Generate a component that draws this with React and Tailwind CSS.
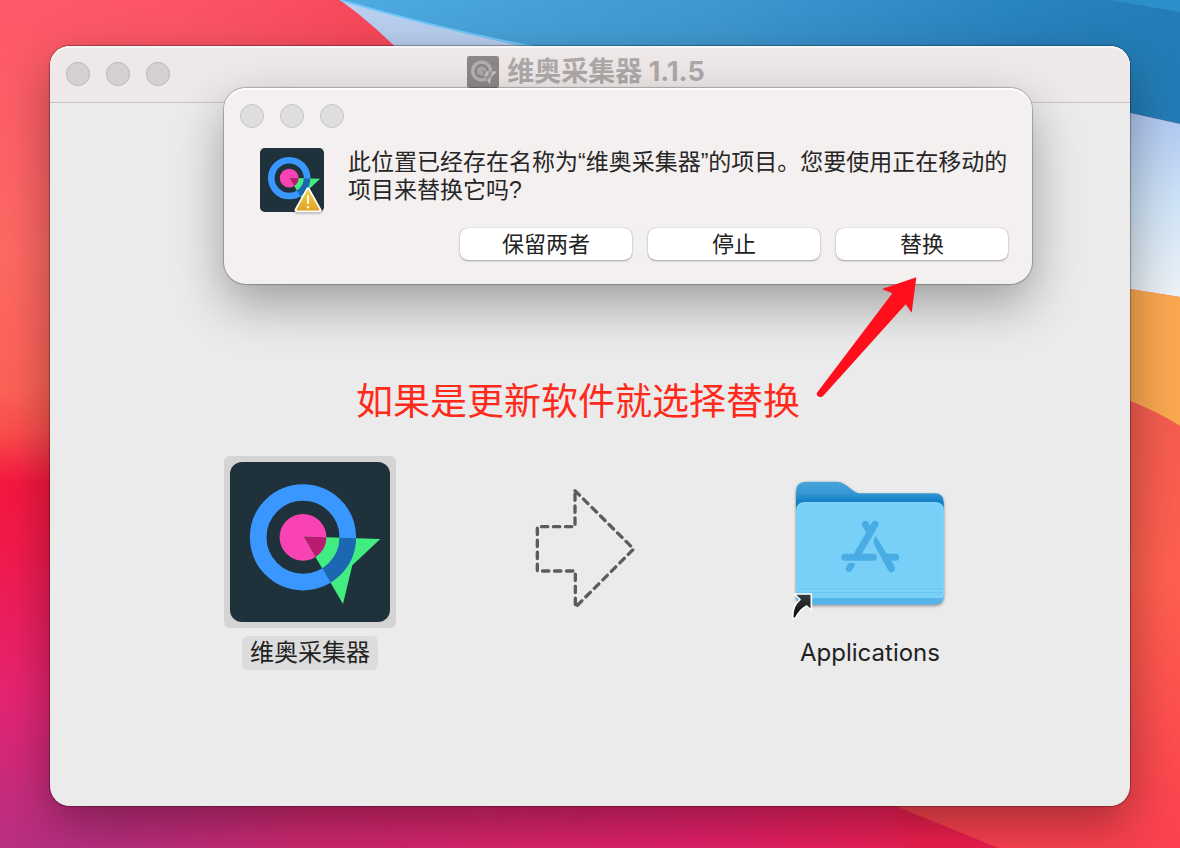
import { useId } from "react";
import clsx from "clsx";

const COLOR_LOGO = {
  tile: "#1f323b",
  ring: "#3a97ff",
  dot: "#f943b5",
  arrow: "#41ec81",
  arrowOnRing: "#1c67b2",
  arrowOnDot: "#bb1a72",
};

const GRAY_LOGO = {
  tile: "#8c8887",
  ring: "#b5b0b0",
  dot: "#aba7a6",
  arrow: "#c6c2c1",
  arrowOnRing: "#9a9695",
  arrowOnDot: "#918d8c",
};

const DIALOG_BUTTONS = ["保留两者", "停止", "替换"];

function Logo({ colors = COLOR_LOGO, className }) {
  const clipId = useId();

  return (
    <svg viewBox="0 0 160 160" className={className} aria-hidden="true">
      <defs>
        <clipPath id={clipId}>
          <path d="M73.5 74.5 150.3 77 122.3 103.3 113 142Z" />
        </clipPath>
      </defs>
      <rect width="160" height="160" rx="12" fill={colors.tile} />
      <circle cx="73" cy="75.3" r="44.8" fill="none" stroke={colors.ring} strokeWidth="16.6" />
      <circle cx="73" cy="75.3" r="23.4" fill={colors.dot} />
      <g clipPath={`url(#${clipId})`}>
        <rect width="160" height="160" fill={colors.arrow} />
        <circle cx="73" cy="75.3" r="44.8" fill="none" stroke={colors.arrowOnRing} strokeWidth="16.6" />
        <circle cx="73" cy="75.3" r="23.4" fill={colors.arrowOnDot} />
      </g>
    </svg>
  );
}

function WarningBadge({ className }) {
  return (
    <svg viewBox="0 0 90 84" className={className} aria-hidden="true">
      <defs>
        <linearGradient id="warning-fill" x1="0" y1="0" x2="0" y2="1">
          <stop offset="0" stopColor="#f8d24a" />
          <stop offset="1" stopColor="#dfa322" />
        </linearGradient>
      </defs>
      <path d="M45 8 82 75H8Z" fill="#fff" stroke="#fff" strokeWidth="13" strokeLinejoin="round" />
      <path d="M45 11 79 73H11Z" fill="url(#warning-fill)" stroke="url(#warning-fill)" strokeWidth="5" strokeLinejoin="round" />
      <path d="M45 29V52" stroke="#fff" strokeWidth="6" strokeLinecap="round" />
      <circle cx="45" cy="65" r="4" fill="#fff" />
    </svg>
  );
}

function DashedArrow() {
  return (
    <svg viewBox="-48 -42 516 516" className="size-[172px]" aria-hidden="true">
      <path
        d="M165 62 341 237 166 412V303H52V170H165Z"
        fill="none"
        stroke="#5c5c5c"
        strokeWidth="10"
        strokeLinecap="round"
        strokeLinejoin="round"
        strokeDasharray="19 17"
      />
    </svg>
  );
}

function ApplicationsFolder() {
  return (
    <svg viewBox="12 -42 516 516" className="size-[172px]" aria-hidden="true">
      <defs>
        <linearGradient id="folder-back" x1="0" y1="35" x2="0" y2="110" gradientUnits="userSpaceOnUse">
          <stop offset="0" stopColor="#48a5d9" />
          <stop offset="0.45" stopColor="#3698d3" />
          <stop offset="0.85" stopColor="#0f7cc6" />
        </linearGradient>
        <linearGradient id="alias-fill" x1="0" y1="0" x2="0" y2="1">
          <stop offset="0" stopColor="#3a3d42" />
          <stop offset="1" stopColor="#0a0a0a" />
        </linearGradient>
        <filter id="folder-shadow" x="-10%" y="-10%" width="120%" height="125%">
          <feDropShadow dx="0" dy="4" stdDeviation="4" floodOpacity="0.45" />
        </filter>
      </defs>
      <g filter="url(#folder-shadow)">
        <path
          d="M48 65Q48 35 78 35H165C182 35 190 39 202 48L217 60C226 67 232 70 246 70H464Q491 70 491 97V376Q491 403 464 403H76Q48 403 48 376Z"
          fill="url(#folder-back)"
        />
        <path d="M49 122Q49 97 74 97H466Q491 97 491 122V376Q491 403 464 403H76Q49 403 49 376Z" fill="#78d0f9" />
      </g>
      <path d="M49 383H490Q487 403 464 403H76Q52 403 49 383Z" fill="#54b6e8" />
      <path d="M49 357H491M49 368H491" stroke="#6bc5f1" strokeWidth="3" />
      <path d="M49 362H491M49 382H491" stroke="#8ad9fc" strokeWidth="2" />
      <path d="M50 378V122Q50 98 74 98H466Q490 98 490 122V378" fill="none" stroke="#98dffd" strokeWidth="2" />
      <g fill="none" stroke="#49ade5" strokeWidth="21" strokeLinecap="round">
        <path d="M285 163 233 252" />
        <path d="M256 163 268 183" />
        <path d="M194 262H280" />
        <path d="M325 262H347" />
      </g>
      <path
        d="M287 198C279 208 280 219 285 228L324 300C329 309 337 310 342 304C346 299 346 293 342 286Z"
        fill="#49ade5"
      />
      <path d="M206 280C212 277 220 278 226 283L218 298C213 309 199 309 197 298C197 292 202 285 206 280Z" fill="#49ade5" />
      <path
        d="M43 372H94V421L80 408C65 415 54 430 46 445H38C37 420 46 399 60 389Z"
        fill="url(#alias-fill)"
        stroke="#fff"
        strokeWidth="5"
        strokeLinejoin="round"
      />
    </svg>
  );
}

function Wallpaper() {
  return (
    <svg
      viewBox="0 0 1180 848"
      preserveAspectRatio="none"
      className="absolute inset-0 size-full"
      aria-hidden="true"
    >
      <defs>
        <linearGradient id="wall-left" x1="0" y1="0" x2="0" y2="1">
          <stop offset="0" stopColor="#fd5869" />
          <stop offset="0.3" stopColor="#fe6963" />
          <stop offset="0.46" stopColor="#fd6258" />
          <stop offset="0.51" stopColor="#fb4d4c" />
          <stop offset="0.57" stopColor="#f61740" />
          <stop offset="0.65" stopColor="#f21a4c" />
          <stop offset="0.82" stopColor="#e62472" />
          <stop offset="1" stopColor="#b73082" />
        </linearGradient>
        <linearGradient id="wall-top" x1="0" y1="0" x2="1" y2="0">
          <stop offset="0" stopColor="#fd5869" stopOpacity="0" />
          <stop offset="1" stopColor="#f64558" />
        </linearGradient>
        <linearGradient id="wall-bottom" x1="0" y1="0" x2="1" y2="0">
          <stop offset="0" stopColor="#b73082" stopOpacity="0" />
          <stop offset="0.3" stopColor="#d0286f" />
          <stop offset="0.7" stopColor="#e4206a" />
          <stop offset="1" stopColor="#f31f4c" />
        </linearGradient>
        <linearGradient id="wall-blue" x1="340" y1="0" x2="1180" y2="110" gradientUnits="userSpaceOnUse">
          <stop offset="0" stopColor="#4eaae0" />
          <stop offset="0.45" stopColor="#3e97cf" />
          <stop offset="0.8" stopColor="#2983be" />
          <stop offset="1" stopColor="#227bb5" />
        </linearGradient>
        <linearGradient id="wall-sky" x1="0" y1="113" x2="0" y2="297" gradientUnits="userSpaceOnUse">
          <stop offset="0" stopColor="#b0c8f3" />
          <stop offset="0.5" stopColor="#cfe3f6" />
          <stop offset="1" stopColor="#edf3f7" />
        </linearGradient>
        <linearGradient id="wall-right" x1="0" y1="400" x2="0" y2="848" gradientUnits="userSpaceOnUse">
          <stop offset="0" stopColor="#f45c50" />
          <stop offset="0.4" stopColor="#ff604f" />
          <stop offset="1" stopColor="#fc404f" />
        </linearGradient>
      </defs>
      <rect width="1180" height="848" fill="url(#wall-left)" />
      <rect width="400" height="60" fill="url(#wall-top)" />
      <rect y="780" width="1000" height="68" fill="url(#wall-bottom)" />
      <path d="M340 0H600V60H408Q376 26 340 0Z" fill="#b9cfef" />
      <path d="M340 0H1180V124L1130 113 560 54Q450 32 340 0Z" fill="url(#wall-blue)" />
      <path d="M340 0Q450 32 560 52" fill="none" stroke="#72c8fa" strokeWidth="2" />
      <path d="M1109 0H1180V12Z" fill="#2b8fc9" />
      <path d="M1100 108 1130 113 1180 124V297L1130 289 1100 287Z" fill="url(#wall-sky)" />
      <path d="M1100 287 1130 289 1180 297V426Q1156 411 1130 401L1100 390Z" fill="#fba850" />
      <path d="M1100 390 1130 401Q1156 411 1180 426V848H998L895 806 860 780H1100Z" fill="url(#wall-right)" />
      <path d="M895 806 998 848H900Z" fill="#ee1f4f" />
    </svg>
  );
}

function WindowControls({ muted = false }) {
  return (
    <div className="flex gap-4">
      {["关闭", "最小化", "缩放"].map((label) => (
        <button
          key={label}
          type="button"
          aria-label={label}
          className={clsx("size-6 rounded-full border", muted ? "border-[#bbb5b5] bg-[#d6d0d0]" : "border-[#c5c4c2] bg-[#dededc]")}
        />
      ))}
    </div>
  );
}

function ReplaceDialog() {
  return (
    <div
      role="dialog"
      aria-labelledby="dialog-message"
      className="absolute top-[42px] left-[174px] w-[808px] rounded-[22px] bg-[#f4f0ef] pt-4 pb-6 shadow-[0_0_1px_1px_rgba(0,0,0,0.25),0_20px_50px_rgba(0,0,0,0.33),inset_0_2px_0_#fff]"
    >
      <div className="px-4">
        <WindowControls />
      </div>
      <div className="mt-5 flex gap-6 pl-9">
        <div className="relative size-16 shrink-0">
          <Logo className="size-16" />
          <WarningBadge className="absolute right-0.5 -bottom-px w-7 drop-shadow-[0_1px_1px_rgba(0,0,0,0.35)]" />
        </div>
        <p
          id="dialog-message"
          className="font-['Liberation_Sans','Noto_Sans_CJK_SC',sans-serif] text-[23px] leading-7 whitespace-nowrap text-[#262626]"
        >
          此位置已经存在名称为“维奥采集器”的项目。您要使用正在移动的
          <br />
          项目来替换它吗?
        </p>
      </div>
      <div className="mt-4 flex justify-end gap-4 pr-6">
        {DIALOG_BUTTONS.map((label) => (
          <button
            key={label}
            type="button"
            className="h-8 w-[172px] rounded-lg bg-white text-[22px] leading-8 text-[#222] shadow-[0_0_1px_rgba(0,0,0,0.35),0_1px_2px_rgba(0,0,0,0.3)]"
          >
            {label}
          </button>
        ))}
      </div>
    </div>
  );
}

function PointerArrow() {
  return (
    <svg
      viewBox="525 588 306 369"
      className="pointer-events-none absolute top-[230px] left-[765px] w-[102px]"
      aria-hidden="true"
    >
      <path d="M829 592 815 698 797 673 550 947C542 956 527 948 531 938L757 640 726 627Z" fill="#ff0e1b" />
    </svg>
  );
}

export default function App() {
  return (
    <div className="relative flex min-h-screen flex-col overflow-hidden px-[50px] pt-[46px] pb-[42px] font-['Inter','Noto_Sans_CJK_SC',sans-serif]">
      <Wallpaper />

      <div className="relative flex flex-1 flex-col rounded-[20px] bg-[#ebebeb] shadow-[0_0_1px_1px_rgba(0,0,0,0.3),0_18px_50px_rgba(0,0,0,0.35)]">
        <header className="grid h-[57px] grid-cols-[1fr_auto_1fr] items-center rounded-t-[20px] border-b border-[#c9c4c4] bg-[#eee8e8] pr-6 pl-4 shadow-[inset_0_2px_0_#f9f6f6]">
          <WindowControls muted />
          <h1 className="flex items-center gap-2 pb-1 text-[27px] leading-8 font-bold text-[#aea8a8]">
            <Logo colors={GRAY_LOGO} className="size-8" />
            维奥采集器 1.1.5
          </h1>
        </header>

        <main className="flex-1 pt-[275px]">
          <p className="pl-[306px] text-[37px] leading-[48px] whitespace-nowrap text-[#ff2a1c]">如果是更新软件就选择替换</p>

          <div className="mt-[30px] flex items-start justify-between px-[174px] text-2xl text-[#222]">
            <figure className="flex w-[172px] flex-col items-center">
              <div className="rounded-md bg-[#d4d4d4] p-1.5">
                <Logo className="size-40" />
              </div>
              <figcaption className="mt-2 rounded-md bg-[#dcdcdc] px-2 leading-[34px]">维奥采集器</figcaption>
            </figure>

            <DashedArrow />

            <figure className="flex w-[172px] flex-col items-center">
              <ApplicationsFolder />
              <figcaption className="mt-2 leading-[34px]">Applications</figcaption>
            </figure>
          </div>
        </main>

        <ReplaceDialog />
        <PointerArrow />
      </div>
    </div>
  );
}
